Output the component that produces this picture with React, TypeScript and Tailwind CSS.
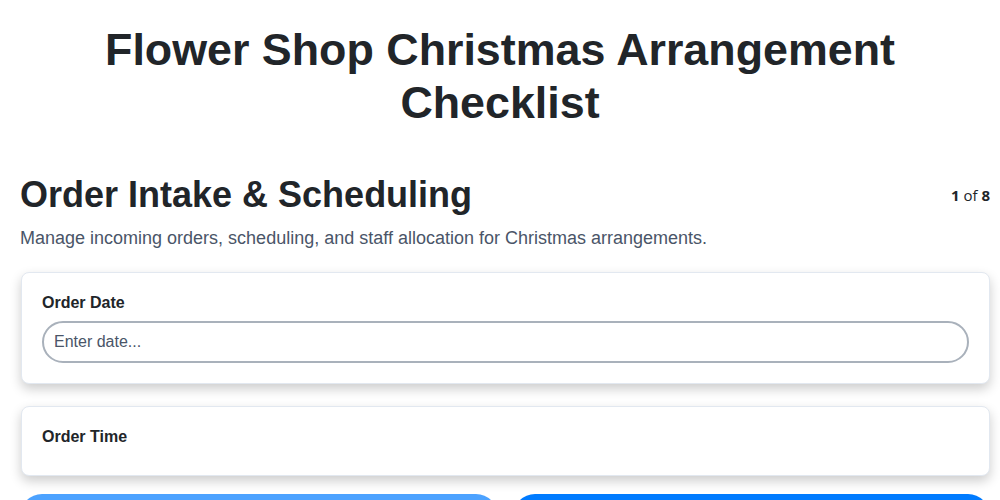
import React from "react";

export default function App() {
  return (
    <div className="min-h-screen bg-white text-[#212529]" style={{ fontFamily: '"Liberation Sans", Arial, sans-serif' }}>
      <h1 className="pt-[23px] text-center text-[44.8px] font-bold leading-[53px] px-5">
        Flower Shop Christmas Arrangement
        <br />
        Checklist
      </h1>
      <div className="ml-[21px] mr-[10px] mt-[46px]">
        <div className="flex items-center justify-between">
          <h2 className="-ml-px text-[36px] font-bold leading-[40px]">Order Intake &amp; Scheduling</h2>
          <div className="text-[15px] text-[#212529]" style={{ fontFamily: '"Open Sans", "Noto Sans", sans-serif' }}>
            <span className="font-bold">1</span> of <span className="font-bold">8</span>
          </div>
        </div>
        <p className="-ml-px mt-[10px] text-[18px] leading-[27px] text-[#4a5568]">
          Manage incoming orders, scheduling, and staff allocation for Christmas arrangements.
        </p>
        <div className="mt-[20px] flex flex-col gap-[22px]">
          <div className="rounded-lg border border-[#e2e8f0] bg-white p-5 shadow-[0_5px_12px_rgba(0,0,0,0.2)]">
            <label className="mb-2 block text-[16px] font-bold leading-[20px]">Order Date</label>
            <input
              className="block h-[42px] w-full rounded-full border-2 border-[#a9b1bb] px-[10px] text-[16px] text-[#212529] outline-none placeholder:text-[#4a5568]"
              placeholder="Enter date..."
            />
          </div>
          <div className="rounded-lg border border-[#e2e8f0] bg-white p-5 shadow-[0_5px_12px_rgba(0,0,0,0.2)]">
            <label className="mb-2 block text-[16px] font-bold leading-[20px]">Order Time</label>
          </div>
        </div>
        <div className="-ml-px mt-[18px] flex gap-[15px]">
          <button className="h-[44px] flex-1 rounded-full bg-[#007bff] text-white opacity-70">Previous</button>
          <button className="h-[44px] flex-1 rounded-full bg-[#007bff] text-white">Next</button>
        </div>
      </div>
    </div>
  );
}
